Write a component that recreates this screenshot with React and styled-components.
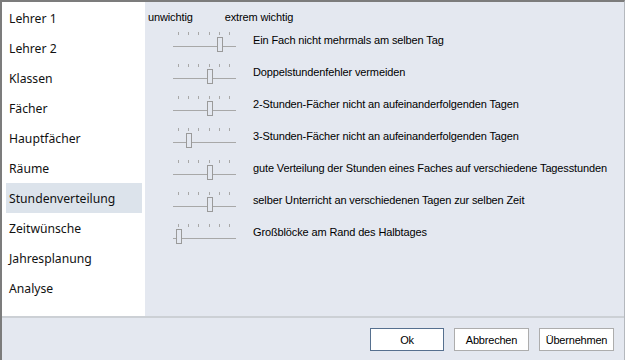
import React from 'react';
import styled, { createGlobalStyle } from 'styled-components';

const GlobalStyle = createGlobalStyle`
    html, body {
        margin: 0;
        padding: 0;
        background: #ffffff;
    }
    #root {
        width: 626px;
        height: 361px;
    }
`

const Window = styled.div`
    box-sizing: border-box;
    width: 625px;
    height: 360px;
    display: flex;
    flex-direction: column;
    background: #e4e8f0;
    border-top: 2px solid #7c7c7c;
    border-left: 2px solid #7c7c7c;
    border-right: 1px solid #b4b8bd;
`

const Main = styled.div`
    flex: 1;
    display: flex;
    min-height: 0;
`

const Sidebar = styled.nav`
    width: 143px;
    background: #ffffff;
    padding-top: 1px;
    display: flex;
    flex-direction: column;
`

const NavItem = styled.div`
    height: 30px;
    margin: 0 3px 0 4px;
    padding-left: 3px;
    display: flex;
    align-items: center;
    font-family: "Noto Sans", "Open Sans", sans-serif;
    font-size: 12.2px;
    color: #111111;
    background: ${p => (p.$active ? '#dce3eb' : 'transparent')};
`

const Content = styled.section`
    flex: 1;
    padding: 8px 0 0 3px;
    font-family: "Liberation Sans", Arial, sans-serif;
    font-size: 11px;
    color: #000000;
    letter-spacing: -0.13px;
`

const Scale = styled.div`
    display: flex;
    gap: 32px;
    height: 14px;
    line-height: 14px;
`

const Row = styled.div`
    height: 32px;
    display: flex;
    align-items: center;
    padding-left: 24px;
    gap: 5px;
`

const Label = styled.span`
    white-space: nowrap;
`

const Footer = styled.footer`
    height: 44px;
    border-top: 2px solid #ccd0d5;
    display: flex;
    justify-content: flex-end;
    align-items: flex-start;
    gap: 10px;
    padding: 10px 10px 0 0;
    box-sizing: border-box;
`

const Button = styled.button`
    box-sizing: border-box;
    width: ${p => (p.$narrow ? '74px' : '75px')};
    height: 23px;
    background: #ffffff;
    border: 1px solid ${p => (p.$primary ? '#56708f' : '#adadad')};
    font-family: "Liberation Sans", Arial, sans-serif;
    font-size: 11px;
    letter-spacing: -0.2px;
    color: #000000;
    padding: 0;
`

const TICKS = [6, 16.2, 26.4, 36.6, 46.8, 57];

const Slider = ({ value }) => {
    const x = TICKS[value];
    return (
        <svg width="76" height="32" viewBox="0 0 76 32">
            {TICKS.map((t, i) => (
                <line key={i} x1={Math.round(t) + 0.5} x2={Math.round(t) + 0.5} y1="8" y2="11" stroke="#a8a8a8" strokeWidth="1" />
            ))}
            <line x1="1" x2="64" y1="22.5" y2="22.5" stroke="#a8a8a8" strokeWidth="1" />
            <rect x={Math.round(x) - 2 + 0.5} y="13.5" width="5" height="14" fill="#e4e8f0" stroke="#9a9a9a" strokeWidth="1" />
        </svg>
    );
}

const navItems = [
    'Lehrer 1', 'Lehrer 2', 'Klassen', 'Fächer', 'Hauptfächer', 'Räume',
    'Stundenverteilung', 'Zeitwünsche', 'Jahresplanung', 'Analyse',
];

const rules = [
    { label: 'Ein Fach nicht mehrmals am selben Tag', value: 4 },
    { label: 'Doppelstundenfehler vermeiden', value: 3 },
    { label: '2-Stunden-Fächer nicht an aufeinanderfolgenden Tagen', value: 3 },
    { label: '3-Stunden-Fächer nicht an aufeinanderfolgenden Tagen', value: 1 },
    { label: 'gute Verteilung der Stunden eines Faches auf verschiedene Tagesstunden', value: 3 },
    { label: 'selber Unterricht an verschiedenen Tagen zur selben Zeit', value: 3 },
    { label: 'Großblöcke am Rand des Halbtages', value: 0 },
];

const App = () => {
    return (
        <>
            <GlobalStyle />
            <Window>
                <Main>
                    <Sidebar>
                        {navItems.map(item => (
                            <NavItem key={item} $active={item === 'Stundenverteilung'}>{item}</NavItem>
                        ))}
                    </Sidebar>
                    <Content>
                        <Scale>
                            <span>unwichtig</span>
                            <span>extrem wichtig</span>
                        </Scale>
                        {rules.map(r => (
                            <Row key={r.label}>
                                <Slider value={r.value} />
                                <Label>{r.label}</Label>
                            </Row>
                        ))}
                    </Content>
                </Main>
                <Footer>
                    <Button $primary $narrow>Ok</Button>
                    <Button>Abbrechen</Button>
                    <Button>Übernehmen</Button>
                </Footer>
            </Window>
        </>
    )
}

export default App
